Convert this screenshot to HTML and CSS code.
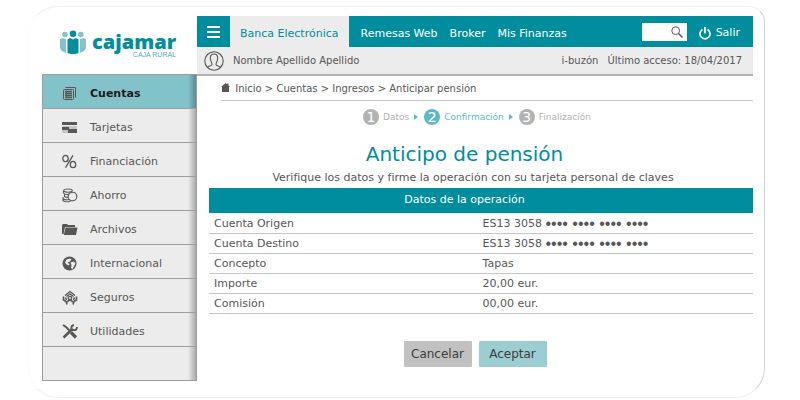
FILE: index.html
```html
<!DOCTYPE html>
<html lang="es">

<head>
    <meta charset="UTF-8">
    <meta name="viewport" content="width=device-width, initial-scale=1.0">
    <title>Anticipo de pensión</title>
    <link rel="stylesheet" href="styles.css">
</head>

<body>
    <div class="frame">
        <!-- logo + menu lateral -->
        <div class="side">
            <a class="logo" href="#" aria-label="Cajamar">
                <svg class="logo-mark" viewBox="0 0 26 25" aria-hidden="true">
                    <g fill="#82c3ca">
                        <circle cx="5" cy="4.500" r="2.800"/>
                        <circle cx="20.800" cy="4.500" r="2.800"/>
                        <path d="M0 9l2.500-.800L6 9v14C2 21.500 0 20 0 17z"/>
                        <path d="M26 9l-2.500-.800L20 9v14c4-1.500 6-3 6-6z"/>
                    </g>
                    <circle cx="13" cy="3.800" r="3.300" fill="#008d9e"/>
                    <path d="M7.500 9.500l2.500-1.500 3 1.500L16 8l2.500 1.500V23c-3 1.500-8 1.500-11 0z" fill="#008d9e"/>
                </svg>
                <span class="logo-text">
                    <span class="logo-name">cajamar</span>
                    <span class="logo-sub">CAJA RURAL</span>
                </span>
            </a>
            <nav class="menu">
                <a class="menu-item active" href="#">
                    <svg viewBox="0 0 16 16" fill="none" stroke="#575756">
                        <path d="M3.500 1.500h10v10"/>
                        <rect x="1.500" y="3.500" width="10" height="10" rx="1"/>
                        <path d="M3 5.500h7M3 7.500h7M3 9.500h7M3 11.500h7" stroke-width="1.300"/>
                        <path d="M4.500 5v7"/>
                    </svg>
                    Cuentas
                </a>
                <a class="menu-item" href="#">
                    <svg viewBox="0 0 16 16" fill="#575756">
                        <path d="M0 2h15v3H0z"/>
                        <path d="M0 6h15v7H0z" fill="#c6c6c6"/>
                        <path d="M0 7h7v3H0zM6 9h9v4H6z"/>
                    </svg>
                    Tarjetas
                </a>
                <a class="menu-item" href="#">
                    <svg viewBox="0 0 16 16" fill="none" stroke="#575756" stroke-width="1.300">
                        <ellipse cx="3.500" cy="4.500" rx="2.700" ry="3.200"/>
                        <ellipse cx="11" cy="10.500" rx="2.700" ry="3.200"/>
                        <path d="M11 1.300L3.500 13.700"/>
                    </svg>
                    Financiación
                </a>
                <a class="menu-item" href="#">
                    <svg viewBox="0 0 16 16" fill="none" stroke="#575756" stroke-width="1.100">
                        <circle cx="10.500" cy="8.500" r="4.300"/>
                        <ellipse cx="6" cy="2.600" rx="4.300" ry="1.600"/>
                        <path d="M1.500 3v2c1 1.300 3.500 1.700 5.500 1.300M2.500 6.500v2C3.300 9.200 4.500 9.500 6 9.300M1 9v1.500c1 1.200 3.500 1.600 6 1M1 11v1.500c1.500 1.500 5 1.700 7.500.5"/>
                    </svg>
                    Ahorro
                </a>
                <a class="menu-item" href="#">
                    <svg viewBox="0 0 16 16" fill="#575756">
                        <path d="M0 3l1-1h4l1 1h7v2H3L1.500 12H0z"/>
                        <path d="M3.500 5.500H15.500L14 13H1.800z"/>
                    </svg>
                    Archivos
                </a>
                <a class="menu-item" href="#">
                    <svg viewBox="0 0 16 16">
                        <circle cx="7.500" cy="7.500" r="7" fill="#575756"/>
                        <path d="M3 6.500l1.500-3L8 2.500l1.500 1L8 5.500 5.500 6.500 7.500 8 7 9.500 4.500 8.500zM8.500 6.500l3-1 2 1.500-1 2.500-2 3.500L9 12l.500-3z" fill="#ececec"/>
                    </svg>
                    Internacional
                </a>
                <a class="menu-item" href="#">
                    <svg viewBox="0 0 16 16" fill="none" stroke="#575756" stroke-width="1.300">
                        <path d="M3 5.500l5-4 5 4M4.500 6.500L8 4l3.500 2.500"/>
                        <circle cx="8" cy="8" r="1.700"/>
                        <path d="M5.500 12.500c0-3 5-3 5 0"/>
                        <path d="M1.500 6.500v3.500l2.500 1.500 1 3M14.500 6.500v3.500L12 11.500l-1 3M3.500 7.500l1 2.500M12.500 7.500l-1 2.500" stroke-width="1.600"/>
                    </svg>
                    Seguros
                </a>
                <a class="menu-item" href="#">
                    <svg viewBox="0 0 16 16" fill="none" stroke="#575756">
                        <path d="M1 1l3 2 4 4" stroke-width="2"/>
                        <path d="M9 8.500l5 5" stroke-width="3.200"/>
                        <path d="M1.500 13.500L10.500 5" stroke-width="2.600"/>
                        <path d="M12 1.200C9 1 8.500 5.500 11 6s4-.5 4-3" stroke-width="1.900"/>
                    </svg>
                    Utilidades
                </a>
                <div class="menu-rest"></div>
            </nav>
        </div>

        <div class="page">
            <header>
                <div class="topbar">
                    <button class="burger" type="button" aria-label="Menú">
                        <svg viewBox="0 0 13 12" stroke="#fff" stroke-width="2">
                            <path d="M0 1h13M0 6h13M0 11h13"/>
                        </svg>
                    </button>
                    <nav class="tabs">
                        <a class="tab selected" href="#">Banca Electrónica</a>
                        <a class="tab" href="#">Remesas Web</a>
                        <a class="tab" href="#">Broker</a>
                        <a class="tab" href="#">Mis Finanzas</a>
                    </nav>
                    <label class="search">
                        <input type="search" aria-label="Buscar">
                        <svg viewBox="0 0 12 12" fill="none" stroke="#575756">
                            <circle cx="4.700" cy="4.700" r="3.900"/>
                            <path d="M7.500 7.500l4 4" stroke-width="1.400"/>
                        </svg>
                    </label>
                    <a class="exit" href="#">
                        <svg viewBox="0 0 12 13" fill="none" stroke="#fff" stroke-width="1.700">
                            <path d="M3.500 2.500a5 5 0 1 0 5 0M6 0v6.500"/>
                        </svg>
                        Salir
                    </a>
                </div>
                <div class="userbar">
                    <svg viewBox="0 0 20 20" fill="none" stroke="#575756" stroke-width="1.100">
                        <circle cx="10" cy="10" r="9.200"/>
                        <path d="M3.500 16.300c1-1.300 4-1.300 4.500-2.500.3-1-.2-2-1-3.500C6 8 5.500 3 10 3s4 5 3 7.300c-.8 1.500-1.300 2.500-1 3.500.5 1.200 3.500 1.200 4.500 2.500"/>
                    </svg>
                    <span class="user-name">Nombre Apellido Apellido</span>
                    <a href="#">i-buzón</a>
                    <span>Último acceso: 18/04/2017</span>
                </div>
            </header>

            <main>
                <nav class="breadcrumb">
                    <svg viewBox="0 0 9 9" fill="#575756">
                        <path d="M4.500 0l1.500 1.200V.500h1.500v2L9 4H8v5H1V4H0z"/>
                    </svg>
                    <a href="#">Inicio</a> &gt; <a href="#">Cuentas</a> &gt; <a href="#">Ingresos</a> &gt; <span>Anticipar pensión</span>
                </nav>

                <ol class="steps">
                    <li><b>1</b>Datos</li>
                    <li class="current"><b>2</b>Confirmación</li>
                    <li><b>3</b>Finalización</li>
                </ol>

                <h1>Anticipo de pensión</h1>
                <p class="intro">Verifique los datos y firme la operación con su tarjeta personal de claves</p>

                <table>
                    <caption>Datos de la operación</caption>
                    <tr>
                        <th scope="row">Cuenta Origen</th>
                        <td>ES13 3058 <span class="dots">•••• •••• •••• ••••</span></td>
                    </tr>
                    <tr>
                        <th scope="row">Cuenta Destino</th>
                        <td>ES13 3058 <span class="dots">•••• •••• •••• ••••</span></td>
                    </tr>
                    <tr>
                        <th scope="row">Concepto</th>
                        <td>Tapas</td>
                    </tr>
                    <tr>
                        <th scope="row">Importe</th>
                        <td>20,00 eur.</td>
                    </tr>
                    <tr>
                        <th scope="row">Comisión</th>
                        <td>00,00 eur.</td>
                    </tr>
                </table>

                <div class="actions">
                    <button class="cancel" type="button">Cancelar</button>
                    <button class="accept" type="button">Aceptar</button>
                </div>
            </main>
        </div>
    </div>
</body>

</html>
```
FILE: styles.css
```css
* {
    box-sizing: border-box;
}

body {
    margin: 0;
    padding: 6px 35px 2px 28px;
    background: #fff;
    color: #575756;
    font-family: "DejaVu Sans", Verdana, sans-serif;
    font-size: 11px;
    line-height: 14px;
}

a {
    color: inherit;
    text-decoration: none;
}

button {
    border: none;
    font-family: inherit;
    cursor: pointer;
}

.frame {
    display: flex;
    align-items: flex-start;
    padding: 9px 11px 16px 13px;
    border: 1px solid #f0f0f0;
    border-right-color: #d4d4d4;
    border-left-color: #fafafa;
    border-radius: 30px 16px 30px 30px;
}

/* lateral */
.side {
    flex: none;
    width: 155px;
}

.logo {
    display: flex;
    align-items: flex-start;
    gap: 6px;
    height: 58px;
    padding: 14px 0 0 18px;
}

.logo-mark {
    width: 26px;
    height: 25px;
}

.logo-text {
    display: flex;
    flex-direction: column;
    color: #008d9e;
}

.logo-name {
    font-family: "Noto Sans", "Open Sans", sans-serif;
    font-size: 20px;
    font-weight: 900;
    line-height: 24px;
}

.logo-sub {
    margin-top: -3px;
    font-family: "Liberation Sans", Arial, sans-serif;
    font-size: 7px;
    line-height: 7px;
    text-align: right;
    color: #4fabb6;
}

.menu {
    border: 1px solid #9d9d9c;
    background: linear-gradient(to left, #a8a8a8, #ececec 8px);
}

.menu-item {
    display: flex;
    align-items: center;
    gap: 12px;
    height: 34px;
    padding: 4px 0 0 19px;
    border-bottom: 1px solid #9d9d9c;
}

.menu-item svg {
    width: 16px;
    height: 16px;
}

.menu-item.active {
    background: linear-gradient(to left, #5d8b90, #82c3ca 8px);
    color: #1d1d1b;
    font-weight: bold;
}

.menu-rest {
    height: 33px;
}

/* cabecera */
.page {
    flex: 1;
}

header {
    border-bottom: 2px solid #b2b2b2;
}

.topbar {
    display: flex;
    align-items: center;
    height: 31px;
    padding-right: 13px;
    background: #008d9e;
    color: #fff;
}

.burger {
    width: 33px;
    padding: 0;
    background: none;
}

.burger svg {
    display: block;
    width: 13px;
    height: 12px;
    margin: auto;
}

.tabs {
    display: flex;
    flex: 1;
    align-self: stretch;
    gap: 12px;
}

.tab {
    display: flex;
    align-items: center;
    padding-top: 4px;
}

.tab.selected {
    padding: 4px 10px 0;
    background: #ececec;
    color: #008d9e;
}

.search {
    display: flex;
    align-items: center;
    width: 45px;
    height: 18px;
    padding-right: 4px;
    background: #fff;
}

.search input {
    width: 29px;
    height: 18px;
    padding: 0;
    border: none;
    outline: none;
    background: none;
}

.search svg {
    width: 12px;
    height: 12px;
}

.exit {
    display: flex;
    align-items: center;
    gap: 5px;
    margin-left: 12px;
    padding-top: 3px;
}

.exit svg {
    width: 12px;
    height: 13px;
}

.userbar {
    display: flex;
    align-items: center;
    gap: 9px;
    height: 27px;
    padding: 0 11px 0 7px;
    background: #ececec;
    font-size: 10px;
}

.userbar svg {
    width: 20px;
    height: 20px;
}

.user-name {
    flex: 1;
}

/* contenido */
main {
    padding-left: 12px;
}

.breadcrumb {
    margin-left: 12px;
    padding: 6px 0 4px;
    border-bottom: 1px solid #c6c6c6;
    font-size: 10px;
}

.breadcrumb svg {
    width: 9px;
    height: 9px;
    margin-right: 2px;
}

.steps {
    display: flex;
    justify-content: center;
    margin: 8px 8px 0 0;
    padding: 0;
    list-style: none;
    color: #b2b2b2;
    font-size: 9px;
    line-height: 16px;
}

.steps li {
    display: flex;
    align-items: center;
}

.steps li + li::before {
    content: "";
    margin: 0 6px 0 5px;
    border-left: 4px solid #60b8c1;
    border-top: 3px solid transparent;
    border-bottom: 3px solid transparent;
}

.steps b {
    width: 16px;
    height: 16px;
    margin-right: 4px;
    border-radius: 50%;
    background: #b2b2b2;
    color: #fff;
    font-size: 14px;
    font-weight: normal;
    text-align: center;
}

.steps .current {
    color: #60b8c1;
}

.steps .current b {
    background: #60b8c1;
}

h1 {
    margin: 16px 33px 0 0;
    color: #008d9e;
    font-size: 20px;
    font-weight: normal;
    line-height: 26px;
    text-align: center;
}

.intro {
    margin: 4px 16px 3px 0;
    text-align: center;
}

table {
    width: 100%;
    border-collapse: collapse;
    table-layout: fixed;
}

caption {
    padding: 5px 33px 6px 0;
    background: #008d9e;
    color: #fff;
}

th,
td {
    height: 20px;
    padding: 2px 0 0 5px;
    border-bottom: 1px solid #c6c6c6;
    font-weight: normal;
    text-align: left;
}

th {
    width: 49%;
}

td {
    padding-left: 7px;
}

.dots {
    font-family: "Liberation Sans", Arial, sans-serif;
    font-size: 16px;
    line-height: 14px;
    vertical-align: middle;
}

.actions {
    display: flex;
    justify-content: center;
    gap: 7px;
    margin: 27px 12px 0 0;
}

.actions button {
    width: 68px;
    height: 26px;
    padding: 0;
    border-radius: 1px;
    color: #3c3c3b;
    font-size: 12px;
}

.cancel {
    background: #c1c1c1;
}

.accept {
    background: #9bcdd3;
}
```
